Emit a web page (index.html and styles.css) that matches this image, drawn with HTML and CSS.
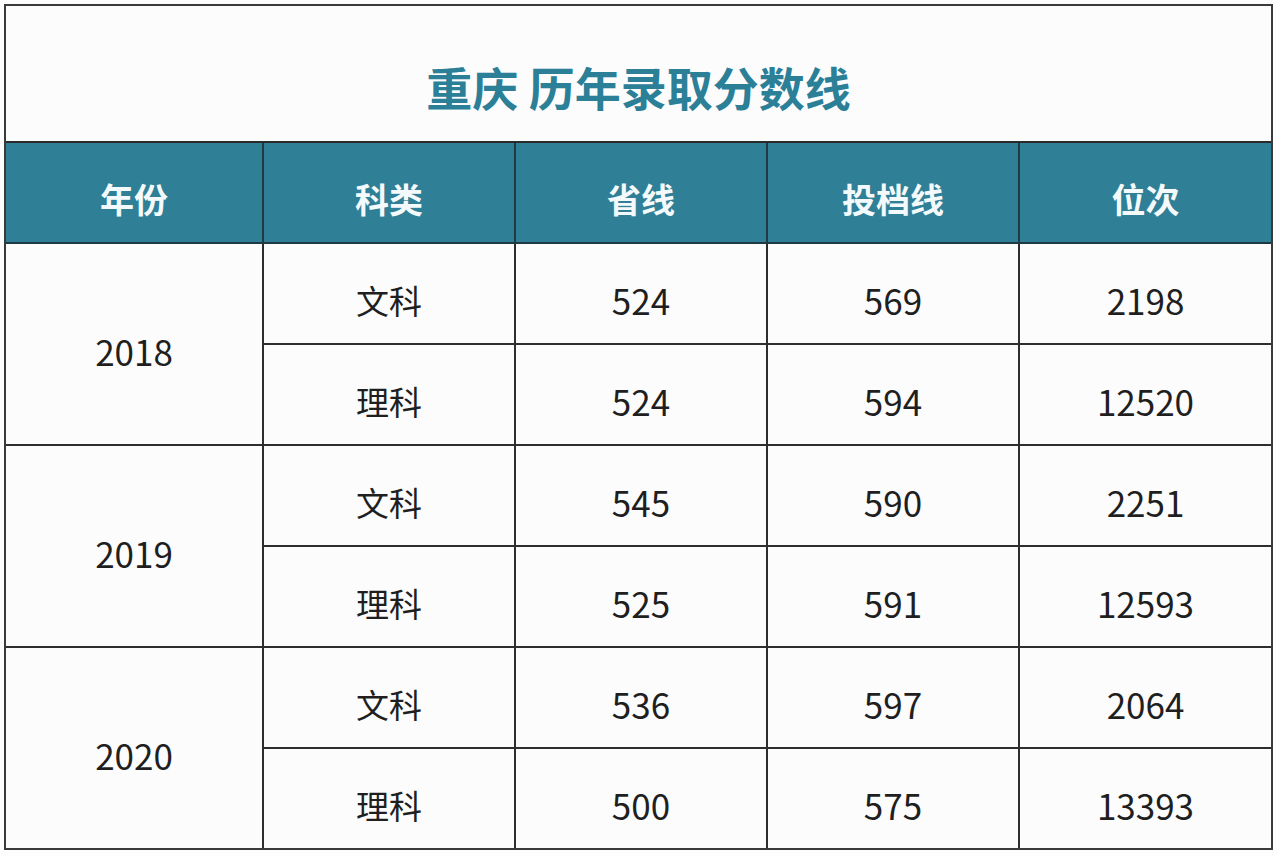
FILE: index.html
```html
<!DOCTYPE html>
<html lang="zh-CN">
<head>
<meta charset="utf-8">
<title>重庆 历年录取分数线</title>
<link rel="stylesheet" href="styles.css">
</head>
<body>
<div class="sheet">
  <div class="title">重庆 历年录取分数线</div>
  <table class="grid">
    <colgroup>
      <col class="c1"><col class="c2"><col class="c2"><col class="c2"><col class="c2">
    </colgroup>
    <thead>
      <tr><th>年份</th><th>科类</th><th>省线</th><th>投档线</th><th>位次</th></tr>
    </thead>
    <tbody>
      <tr><td rowspan="2">2018</td><td class="cn">文科</td><td>524</td><td>569</td><td>2198</td></tr>
      <tr><td class="cn">理科</td><td>524</td><td>594</td><td>12520</td></tr>
      <tr><td rowspan="2">2019</td><td class="cn">文科</td><td>545</td><td>590</td><td>2251</td></tr>
      <tr><td class="cn">理科</td><td>525</td><td>591</td><td>12593</td></tr>
      <tr><td rowspan="2">2020</td><td class="cn">文科</td><td>536</td><td>597</td><td>2064</td></tr>
      <tr><td class="cn">理科</td><td>500</td><td>575</td><td>13393</td></tr>
    </tbody>
  </table>
</div>
</body>
</html>
```
FILE: styles.css
```css
html, body {
  margin: 0;
  padding: 0;
  background: #fdfdfd;
}
body {
  padding: 4px 0 0 4px;
  font-family: "Noto Sans CJK SC", "Noto Sans", sans-serif;
}
.sheet {
  width: 1265px;
  border: 2px solid #3a3a3a;
  background: #fcfcfd;
}
.title {
  height: 137px;
  display: flex;
  align-items: center;
  justify-content: center;
  font-size: 46px;
  font-weight: 700;
  color: #2b8098;
  border-bottom: 2px solid #2a2a2a;
  padding-top: 24px;
  box-sizing: border-box;
}
.grid {
  width: 100%;
  border-collapse: collapse;
  border-style: hidden;
  table-layout: fixed;
}
.c1 { width: 257px; }
.c2 { width: 252px; }
.grid th, .grid td {
  border: 2px solid #2e2e2e;
  text-align: center;
  padding: 12px 0 0 0;
  height: 87px;
}
.grid th {
  background: #2f7f96;
  color: #f4fafb;
  font-size: 34px;
  font-weight: 700;
  border-color: #1f3a42;
}
.grid td {
  font-size: 35px;
  color: #1f1f1f;
  font-weight: 400;
}
.grid td.cn {
  font-size: 33px;
}
```
